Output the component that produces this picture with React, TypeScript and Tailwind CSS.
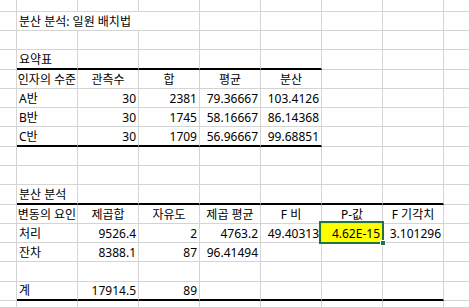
type Cell = { t?: string; a?: 'l' | 'r' | 'c'; hl?: boolean; open?: boolean; noR?: boolean }
type Row = { h: string; cells?: Cell[]; thick?: number }

const widths = ['w-[17px]', 'w-[61px]', 'w-[61px]', 'w-[61px]', 'w-[61px]', 'w-[61px]', 'w-[61px]', 'w-[61px]']

const rows: Row[] = [
  { h: 'h-[12px]' },
  { h: 'h-[19px]', cells: [{}, { t: '분산 분석: 일원 배치법', a: 'l', open: true, noR: true }, { noR: true }] },
  { h: 'h-[19px]' },
  { h: 'h-[20px]', cells: [{}, { t: '요약표', a: 'l' }], thick: 5 },
  {
    h: 'h-[19px]',
    cells: [{}, { t: '인자의 수준', a: 'c' }, { t: '관측수', a: 'c' }, { t: '합', a: 'c' }, { t: '평균', a: 'c' }, { t: '분산', a: 'c' }],
  },
  {
    h: 'h-[19px]',
    cells: [{}, { t: 'A반', a: 'l' }, { t: '30', a: 'r' }, { t: '2381', a: 'r' }, { t: '79.36667', a: 'r' }, { t: '103.4126', a: 'r' }],
  },
  {
    h: 'h-[19px]',
    cells: [{}, { t: 'B반', a: 'l' }, { t: '30', a: 'r' }, { t: '1745', a: 'r' }, { t: '58.16667', a: 'r' }, { t: '86.14368', a: 'r' }],
  },
  {
    h: 'h-[20px]',
    cells: [{}, { t: 'C반', a: 'l' }, { t: '30', a: 'r' }, { t: '1709', a: 'r' }, { t: '56.96667', a: 'r' }, { t: '99.68851', a: 'r' }],
    thick: 5,
  },
  { h: 'h-[19px]' },
  { h: 'h-[19px]' },
  { h: 'h-[20px]', cells: [{}, { t: '분산 분석', a: 'l' }], thick: 7 },
  {
    h: 'h-[19px]',
    cells: [
      {},
      { t: '변동의 요인', a: 'c' },
      { t: '제곱합', a: 'c' },
      { t: '자유도', a: 'c' },
      { t: '제곱 평균', a: 'c' },
      { t: 'F 비', a: 'c' },
      { t: 'P-값', a: 'c' },
      { t: 'F 기각치', a: 'c' },
    ],
  },
  {
    h: 'h-[19px]',
    cells: [
      {},
      { t: '처리', a: 'l' },
      { t: '9526.4', a: 'r' },
      { t: '2', a: 'r' },
      { t: '4763.2', a: 'r' },
      { t: '49.40313', a: 'r' },
      { t: '4.62E-15', a: 'r', hl: true },
      { t: '3.101296', a: 'r' },
    ],
  },
  {
    h: 'h-[19px]',
    cells: [{}, { t: '잔차', a: 'l' }, { t: '8388.1', a: 'r' }, { t: '87', a: 'r' }, { t: '96.41494', a: 'r' }],
  },
  { h: 'h-[20px]' },
  { h: 'h-[19px]', cells: [{}, { t: '계', a: 'l' }, { t: '17914.5', a: 'r' }, { t: '89', a: 'r' }], thick: 7 },
  { h: 'h-[7px]' },
]

function SheetCell({ c, w, thick, last }: { c: Cell; w: string; thick: boolean; last?: boolean }) {
  const align = c.a === 'r' ? 'justify-end pr-[2px]' : c.a === 'c' ? 'justify-center' : 'justify-start pl-[2px]'
  return (
    <div
      className={`relative flex items-end whitespace-nowrap ${w} ${align} ${c.noR || last ? '' : 'border-r border-r-[#d4d4d4]'} ${
        thick ? 'border-b-2 border-b-black' : 'border-b border-b-[#d4d4d4]'
      } ${c.open ? 'overflow-visible z-10' : 'overflow-hidden'} ${c.hl ? 'bg-[#ffff00] overflow-visible' : ''}`}
    >
      {c.t && <span className="leading-4">{c.t}</span>}
      {c.hl && (
        <>
          <div className="absolute -left-[3px] -top-[3px] -right-[2px] -bottom-[2px] z-10 border-2 border-[#217346]" />
          <div className="absolute -right-[4px] -bottom-[4px] z-20 h-[6px] w-[6px] border border-white bg-[#217346]" />
        </>
      )}
    </div>
  )
}

export default function App() {
  return (
    <div
      className="h-[308px] w-[469px] overflow-hidden bg-white text-[12px] text-black"
      style={{ fontFamily: "'Noto Sans', 'Noto Sans CJK KR', sans-serif" }}
    >
      {rows.map((r, i) => (
        <div key={i} className={`flex ${r.h}`}>
          {widths.map((w, j) => (
            <SheetCell key={j} c={r.cells?.[j] ?? {}} w={w} thick={!!r.thick && j >= 1 && j <= r.thick} />
          ))}
          <SheetCell c={{}} w="flex-1" thick={false} last />
        </div>
      ))}
    </div>
  )
}
